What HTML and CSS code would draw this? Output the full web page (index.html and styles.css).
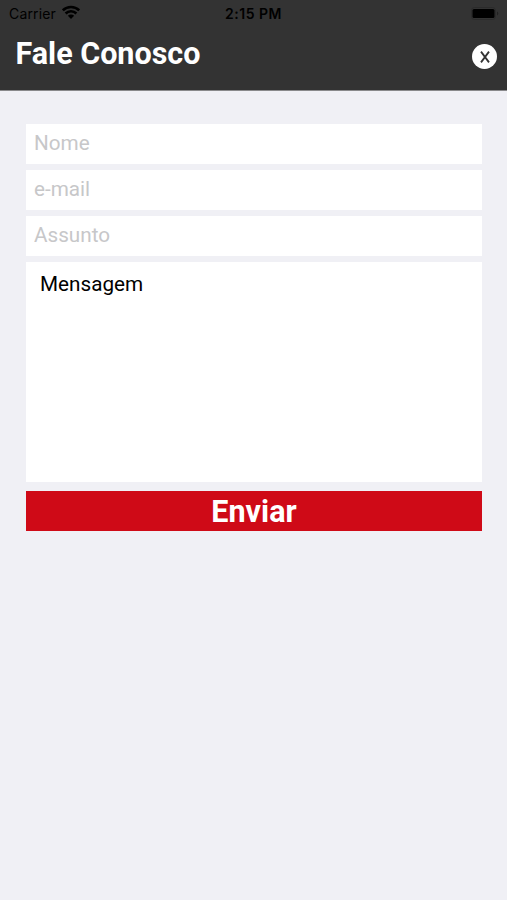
FILE: index.html
```html
<!DOCTYPE html>
<html lang="pt-BR">

<head>
    <meta charset="UTF-8">
    <meta name="viewport" content="width=device-width, initial-scale=1.0">
    <title>Fale Conosco</title>
    <link rel="stylesheet" href="styles.css">
</head>

<body>
    <header class="header">
        <div class="status-bar">
            <div class="carrier">
                <span>Carrier</span>
                <svg class="wifi" viewBox="0 0 18 14" width="18" height="14">
                    <path d="M0.8 5.4a11.5 11.5 0 0 1 16.4 0M3.6 8.5a7.6 7.6 0 0 1 10.8 0" fill="none" stroke="#000" stroke-width="2.6"/>
                    <path d="M5.9 10.8a4.4 4.4 0 0 1 6.2 0L9 14z" fill="#000"/>
                </svg>
            </div>
            <span class="time">2:15 PM</span>
            <div class="battery">
                <svg viewBox="0 0 28 13" width="28" height="13">
                    <rect x="0.5" y="0.5" width="24" height="12" rx="3" fill="none" stroke="#2b2b2b"/>
                    <rect x="1.5" y="2" width="22" height="9" rx="1.5" fill="#000"/>
                    <path d="M26 4.5v4a2.2 2.2 0 0 0 0-4z" fill="#222"/>
                </svg>
            </div>
        </div>
        <div class="title-bar">
            <h1>Fale Conosco</h1>
            <button type="button" class="close" aria-label="Fechar">
                <svg viewBox="0 0 10 12" width="10" height="12">
                    <path d="M1 0.6l8 10.8M9 0.6L1 11.4" stroke="#333" stroke-width="1.8"/>
                </svg>
            </button>
        </div>
    </header>

    <form class="contact-form">
        <input type="text" name="nome" placeholder="Nome">
        <input type="email" name="email" placeholder="e-mail">
        <input type="text" name="assunto" placeholder="Assunto">
        <textarea name="mensagem">Mensagem</textarea>
        <button type="submit" class="send">Enviar</button>
    </form>
</body>

</html>
```

FILE: styles.css
```css
body {
    margin: 0;
    min-height: 100vh;
    font-family: Roboto, sans-serif;
    background-color: #f0f0f5;
}

.header {
    box-sizing: border-box;
    height: 91px;
    background-color: #333333;
    border-bottom: 1px solid #89898b;
}

.status-bar {
    display: grid;
    grid-template-columns: 1fr auto 1fr;
    align-items: center;
    height: 27px;
    padding: 0 8px 0 9px;
    font-family: Inter, sans-serif;
    font-size: 14px;
    color: #000;
}

.carrier {
    display: flex;
    align-items: center;
    gap: 6px;
    letter-spacing: 0.15px;
}

.wifi {
    margin-top: -3px;
}

.time {
    margin-right: 1px;
    font-weight: 600;
    letter-spacing: 0.5px;
}

.battery {
    display: flex;
    justify-content: flex-end;
}

.title-bar {
    display: flex;
    justify-content: space-between;
    align-items: center;
    height: 54px;
    padding: 0 10px 0 15.5px;
}

h1 {
    margin: 0;
    font-size: 30.5px;
    font-weight: 700;
    line-height: 36px;
    color: #fff;
}

.close {
    display: flex;
    align-items: center;
    justify-content: center;
    width: 25px;
    height: 25px;
    margin-top: 5px;
    padding: 0;
    border: none;
    border-radius: 50%;
    background-color: #fff;
    cursor: pointer;
}

.contact-form {
    display: flex;
    flex-direction: column;
    gap: 6px;
    padding: 33px 25px 0 26px;
}

input,
textarea {
    box-sizing: border-box;
    width: 100%;
    border: none;
    border-radius: 0;
    outline: none;
    background-color: #fff;
    font-family: Roboto, sans-serif;
    font-size: 20.7px;
    color: #000;
}

input {
    height: 40px;
    padding: 0 8px 2px;
}

input::placeholder {
    color: #c7c7c9;
}

textarea {
    height: 220px;
    padding: 10px 14px;
    line-height: 25px;
    resize: none;
}

.send {
    height: 40px;
    margin-top: 3px;
    padding: 1px 0 0;
    border: none;
    background-color: #cf0a17;
    font-family: Roboto, sans-serif;
    font-size: 30.5px;
    font-weight: 700;
    line-height: 39px;
    color: #fff;
    cursor: pointer;
}
```
